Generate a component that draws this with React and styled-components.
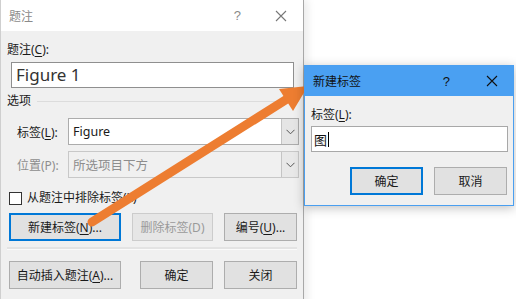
import React from 'react';
import styled, { createGlobalStyle, css } from 'styled-components';

const GlobalStyle = createGlobalStyle`
  html, body {
    margin: 0;
    padding: 0;
    background: #fff;
  }
  body {
    font-family: "Noto Sans", "Noto Sans CJK SC", sans-serif;
    font-size: 12px;
    color: #1a1a1a;
  }
`;

function CloseIcon({ color }) {
  return (
    <svg width="12" height="12" viewBox="0 0 12 12">
      <path d="M1 1 L11 11 M11 1 L1 11" stroke={color} strokeWidth="1.1" fill="none" />
    </svg>
  );
}

function Chevron() {
  return (
    <svg width="9" height="6" viewBox="0 0 9 6">
      <path d="M0.5 0.8 L4.5 4.8 L8.5 0.8" stroke="#555" strokeWidth="1" fill="none" />
    </svg>
  );
}

function Arrow() {
  return (
    <ArrowLayer width="516" height="299" viewBox="0 0 516 299">
      <line x1="92" y1="222" x2="287" y2="99" stroke="#ed7d31" strokeWidth="9" strokeLinecap="round" />
      <polygon points="308,86 279,89 293,111" fill="#ed7d31" />
    </ArrowLayer>
  );
}

function App() {
  return (
    <>
      <GlobalStyle />
      <Desktop>
        <CaptionDialog>
          <TitleBar>
            <TitleText>题注</TitleText>
            <TitleControls>
              <HelpMark $dim>?</HelpMark>
              <CloseIcon color="#777" />
            </TitleControls>
          </TitleBar>
          <DialogBody>
            <FieldLabel>题注(<U>C</U>):</FieldLabel>
            <CaptionInput>Figure 1</CaptionInput>
            <GroupHeader>
              <span>选项</span>
              <Rule />
            </GroupHeader>
            <OptionRow>
              <RowLabel>标签(<U>L</U>):</RowLabel>
              <Select>
                <SelectValue>Figure</SelectValue>
                <SelectButton><Chevron /></SelectButton>
              </Select>
            </OptionRow>
            <OptionRow $disabled>
              <RowLabel $disabled>位置(P):</RowLabel>
              <Select $disabled>
                <SelectValue $disabled>所选项目下方</SelectValue>
                <SelectButton $disabled><Chevron /></SelectButton>
              </Select>
            </OptionRow>
            <CheckRow>
              <CheckBox />
              <span>从题注中排除标签(L)</span>
            </CheckRow>
            <ButtonRow>
              <Button $w={112} $focused>新建标签(<U>N</U>)...</Button>
              <Button $w={81} $disabled>删除标签(D)</Button>
              <Button $w={73}>编号(<U>U</U>)...</Button>
            </ButtonRow>
            <Separator />
            <ButtonRow $bottom>
              <Button $w={112}>自动插入题注(<U>A</U>)...</Button>
              <Button $w={73}>确定</Button>
              <Button $w={73}>关闭</Button>
            </ButtonRow>
          </DialogBody>
        </CaptionDialog>

        <Arrow />

        <NewLabelDialog>
          <ActiveTitleBar>
            <ActiveTitleText>新建标签</ActiveTitleText>
            <TitleControls $gap={36}>
              <HelpMark>?</HelpMark>
              <CloseIcon color="#111" />
            </TitleControls>
          </ActiveTitleBar>
          <SmallBody>
            <FieldLabel>标签(<U>L</U>):</FieldLabel>
            <LabelInput>
              图<Caret />
            </LabelInput>
            <SmallButtons>
              <Button $w={73} $focused>确定</Button>
              <Button $w={73}>取消</Button>
            </SmallButtons>
          </SmallBody>
        </NewLabelDialog>
      </Desktop>
    </>
  );
}

const Desktop = styled.div`
  position: relative;
  width: 516px;
  height: 299px;
  overflow: hidden;
  background: #fff;
`;

const CaptionDialog = styled.div`
  width: 304px;
  height: 320px;
  border-left: 1px solid #cfcfcf;
  border-right: 1px solid #a8a8a8;
  box-sizing: border-box;
  display: flex;
  flex-direction: column;
  box-shadow: 4px 0 8px rgba(0, 0, 0, 0.08);
`;

const TitleBar = styled.div`
  height: 31px;
  flex: none;
  background: #fff;
  display: flex;
  align-items: center;
  justify-content: space-between;
  padding: 0 16px 0 8px;
`;

const TitleText = styled.span`
  color: #8a8a8a;
  font-size: 12px;
`;

const TitleControls = styled.div`
  display: flex;
  align-items: center;
  gap: ${(p) => p.$gap || 34}px;
`;

const HelpMark = styled.span`
  font-family: "Liberation Sans", sans-serif;
  font-size: 13px;
  color: ${(p) => (p.$dim ? '#8a8a8a' : '#111')};
`;

const DialogBody = styled.div`
  flex: 1;
  background: #f0f0f0;
  padding: 11px 0 0 6px;
  display: flex;
  flex-direction: column;
`;

const U = styled.span`
  text-decoration: underline;
  text-underline-offset: 2px;
`;

const FieldLabel = styled.div`
  font-size: 12px;
  line-height: 16px;
  color: #1a1a1a;
`;

const CaptionInput = styled.div`
  margin: 4px 0 0 4px;
  width: 283px;
  height: 26px;
  box-sizing: border-box;
  background: #fff;
  border: 1px solid #8f8f8f;
  padding-left: 4px;
  font-size: 17px;
  line-height: 23px;
  color: #333;
`;

const GroupHeader = styled.div`
  display: flex;
  align-items: center;
  gap: 6px;
  margin-top: 5px;
  line-height: 16px;
  padding-right: 4px;
`;

const Rule = styled.div`
  flex: 1;
  height: 1px;
  background: #dcdcdc;
`;

const OptionRow = styled.div`
  display: flex;
  align-items: center;
  margin-top: ${(p) => (p.$disabled ? 6 : 9)}px;
  padding-left: 10px;
`;

const RowLabel = styled.span`
  width: 51px;
  color: ${(p) => (p.$disabled ? '#8d8d8d' : '#1a1a1a')};
`;

const Select = styled.div`
  width: 231px;
  height: 27px;
  box-sizing: border-box;
  display: flex;
  border: 1px solid ${(p) => (p.$disabled ? '#c8c8c8' : '#acacac')};
  background: ${(p) => (p.$disabled ? '#f0f0f0' : '#fff')};
`;

const SelectValue = styled.div`
  flex: 1;
  padding-left: 4px;
  display: flex;
  align-items: center;
  font-size: 12.5px;
  color: ${(p) => (p.$disabled ? '#8d8d8d' : '#1a1a1a')};
`;

const SelectButton = styled.div`
  width: 16px;
  display: flex;
  align-items: center;
  justify-content: center;
  background: ${(p) => (p.$disabled ? '#e8e8e8' : '#e5e5e5')};
  border-left: 1px solid #c4c4c4;
`;

const CheckRow = styled.div`
  display: flex;
  align-items: center;
  gap: 5px;
  margin: 12px 0 0 2px;
  line-height: 16px;
`;

const CheckBox = styled.div`
  width: 13px;
  height: 13px;
  box-sizing: border-box;
  border: 1px solid #333;
  background: #fff;
`;

const ButtonRow = styled.div`
  display: flex;
  margin-top: ${(p) => (p.$bottom ? 11 : 7)}px;
  padding-left: 2px;
  gap: 11px;
  ${(p) =>
    p.$bottom &&
    css`
      & > :nth-child(2) {
        margin-left: 8px;
      }
    `}
`;

const Button = styled.div`
  width: ${(p) => p.$w}px;
  height: 28px;
  box-sizing: border-box;
  display: flex;
  align-items: center;
  justify-content: center;
  font-size: 12px;
  background: #e1e1e1;
  border: 1px solid #adadad;
  color: ${(p) => (p.$disabled ? '#9a9a9a' : '#1a1a1a')};
  ${(p) =>
    p.$disabled &&
    css`
      background: #e6e6e6;
      border-color: #cccccc;
    `}
  ${(p) =>
    p.$focused &&
    css`
      border: 2px solid #0078d7;
    `}
`;

const Separator = styled.div`
  margin: 6px 6px 0 0;
  height: 2px;
  background: #e3e3e3;
  border-bottom: 1px solid #fafafa;
`;

const ArrowLayer = styled.svg`
  position: absolute;
  left: 0;
  top: 0;
  pointer-events: none;
`;

const NewLabelDialog = styled.div`
  position: absolute;
  left: 304px;
  top: 65px;
  width: 210px;
  height: 141px;
  box-sizing: border-box;
  border: 1px solid #4a9ff0;
  background: #f0f0f0;
  display: flex;
  flex-direction: column;
  box-shadow: 0 2px 10px rgba(0, 0, 0, 0.25);
`;

const ActiveTitleBar = styled.div`
  height: 30px;
  flex: none;
  background: #4aa0f2;
  display: flex;
  align-items: center;
  justify-content: space-between;
  padding: 0 15px 0 8px;
`;

const ActiveTitleText = styled.span`
  font-size: 12px;
  color: #111;
`;

const SmallBody = styled.div`
  flex: 1;
  padding: 11px 0 0 6px;
  display: flex;
  flex-direction: column;
`;

const LabelInput = styled.div`
  margin-top: 3px;
  width: 197px;
  height: 26px;
  box-sizing: border-box;
  border: 1px solid #a8a8a8;
  background: #fff;
  display: flex;
  align-items: center;
  padding-left: 2px;
  font-size: 13px;
  color: #111;
`;

const Caret = styled.span`
  display: inline-block;
  width: 1px;
  height: 15px;
  background: #000;
  margin-left: 1px;
`;

const SmallButtons = styled.div`
  display: flex;
  gap: 11px;
  margin: 15px 0 0 39px;
`;

export default App;
